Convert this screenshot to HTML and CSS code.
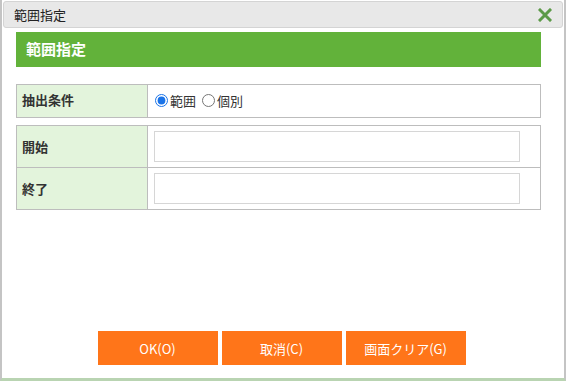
FILE: index.html
```html
<!DOCTYPE html>
<html lang="ja">
<head>
  <meta charset="UTF-8" />
  <title>範囲指定</title>
  <link rel="stylesheet" href="styles.css">
</head>
<body>
  <div class="dialog">
    <div class="titlebar">
      <span class="title">範囲指定</span>
      <span class="close" title="閉じる">
        <svg width="14" height="14" viewBox="0 0 14 14">
          <path d="M2 2 L12 12 M12 2 L2 12" stroke="#5c9a48" stroke-width="3" stroke-linecap="square" fill="none"/>
        </svg>
      </span>
    </div>

    <div class="content">
      <div class="heading">範囲指定</div>

      <table class="form-table first">
        <tr>
          <th>抽出条件</th>
          <td class="radios">
            <label><input type="radio" name="mode" checked />範囲</label>
            <label><input type="radio" name="mode" />個別</label>
          </td>
        </tr>
      </table>

      <table class="form-table">
        <tr>
          <th>開始</th>
          <td><input type="text" class="field" /></td>
        </tr>
        <tr>
          <th>終了</th>
          <td><input type="text" class="field" /></td>
        </tr>
      </table>
    </div>

    <div class="buttons">
      <button>OK(O)</button>
      <button>取消(C)</button>
      <button>画面クリア(G)</button>
    </div>
  </div>
</body>
</html>
```

FILE: styles.css
```css
* {
  margin: 0;
  padding: 0;
  box-sizing: border-box;
}
body {
  font-family: "Noto Sans CJK JP", "Liberation Sans", sans-serif;
  font-size: 13px;
  color: #333;
  background: #fff;
  width: 566px;
  height: 381px;
  overflow: hidden;
}
.dialog {
  height: 381px;
  border-left: 2px solid #c4c4c4;
  border-right: 2px solid #c4c4c4;
  border-bottom: 3px solid #b9d4b2;
  display: flex;
  flex-direction: column;
  padding-top: 1px;
}
.titlebar {
  height: 27px;
  margin: 0 1px;
  background: #e8e8e8;
  border: 1px solid #d4d4d4;
  border-radius: 3px;
  display: flex;
  align-items: center;
  justify-content: space-between;
  padding: 0 10px 0 10px;
}
.title {
  font-size: 13px;
  color: #222;
}
.close {
  display: flex;
  align-items: center;
}
.content {
  padding: 4px 23px 0 14px;
  flex: 1;
}
.heading {
  height: 35px;
  background: #62b23a;
  color: #fff;
  font-weight: bold;
  font-size: 15px;
  line-height: 33px;
  padding-left: 10px;
}
.form-table {
  width: 100%;
  border-collapse: collapse;
  margin-top: 15px;
}
.form-table.first {
  margin-top: 17px;
  margin-bottom: -8px;
}
.form-table th,
.form-table td {
  border: 1px solid #bdbdbd;
  text-align: left;
}
.form-table th {
  width: 131px;
  background: #e3f4dc;
  font-weight: bold;
  font-size: 13px;
  padding: 0 5px;
  height: 42px;
  vertical-align: middle;
}
.form-table.first th {
  height: 33px;
  vertical-align: middle;
  padding-bottom: 3px;
}
.form-table td {
  padding: 0 20px 0 6px;
}
.radios label {
  display: inline-flex;
  align-items: center;
  margin-right: 2px;
}
.radios input {
  width: 13px;
  height: 13px;
  margin: 0 2px 0 1px;
  accent-color: #1a73e8;
}
.field {
  display: block;
  width: 100%;
  height: 31px;
  border: 1px solid #d6d6d6;
  background: #fff;
  font-size: 13px;
  padding: 0 4px;
}
.buttons {
  display: flex;
  justify-content: center;
  gap: 4px;
  padding: 0 3px 13px 0;
}
.buttons button {
  width: 120px;
  height: 34px;
  border: none;
  background: #ff7519;
  color: #fff;
  font-family: "Noto Sans CJK JP", "Liberation Sans", sans-serif;
  font-size: 13px;
  cursor: pointer;
}
```
